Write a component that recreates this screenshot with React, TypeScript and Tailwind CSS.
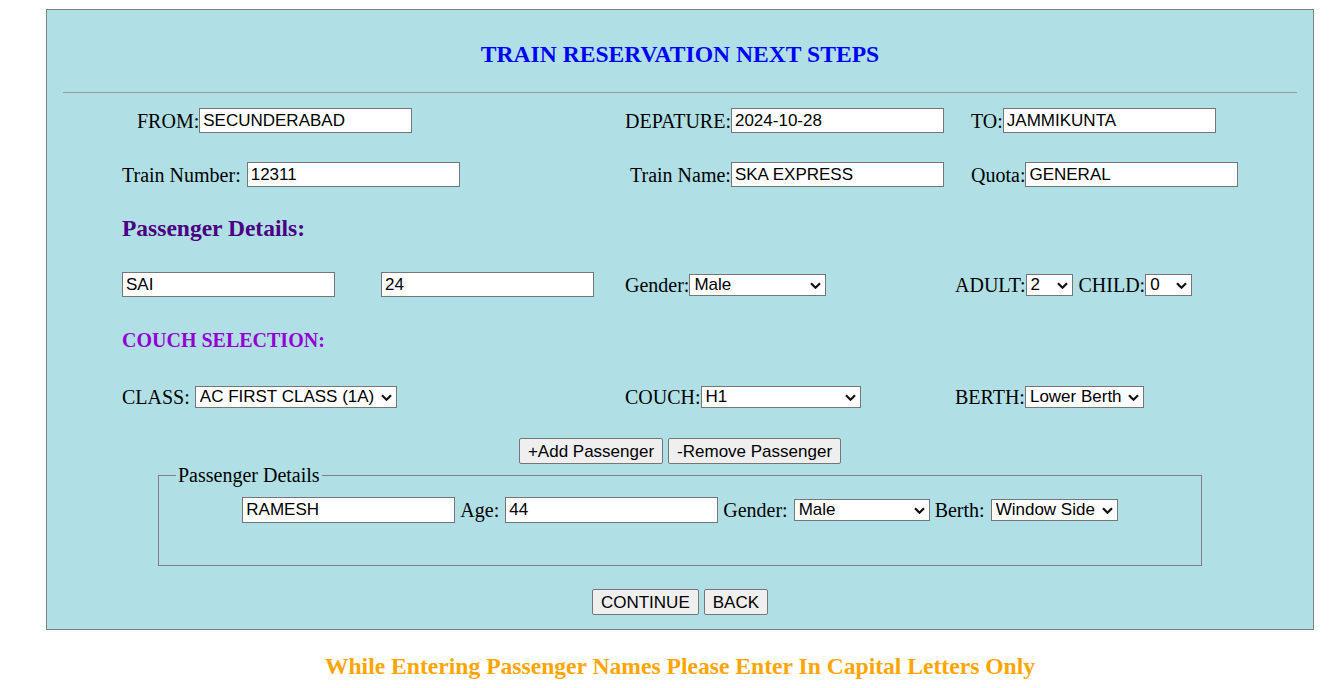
import React from 'react';

const serif = { fontFamily: '"Liberation Serif", "Times New Roman", serif' };

const field =
  'h-[25px] w-[213px] border border-[#767676] bg-white px-[3px] text-[17px] text-black [font-family:"Liberation_Sans",Arial,sans-serif] outline-none';
const btn =
  'h-[26px] rounded-[2px] border border-[#767676] bg-[#efefef] px-[8px] text-[17px] text-black [font-family:"Liberation_Sans",Arial,sans-serif]';

function Pick({ width, value, options }: { width: string; value: string; options: string[] }) {
  return (
    <div className={`relative inline-flex ${width}`}>
      <select
        defaultValue={value}
        className='h-[22px] w-full appearance-none border border-[#767676] bg-white pl-[4px] pr-[20px] text-[17px] leading-[20px] text-black [font-family:"Liberation_Sans",Arial,sans-serif]'
      >
        {options.map((o) => (
          <option key={o}>{o}</option>
        ))}
      </select>
      <svg
        className="pointer-events-none absolute right-[5px] top-[8px]"
        width="11"
        height="7"
        viewBox="0 0 11 7"
        fill="none"
        stroke="#111"
        strokeWidth="2.2"
      >
        <path d="M1 1.2l4.5 4.5 4.5-4.5" />
      </svg>
    </div>
  );
}

export default function App() {
  return (
    <div className="min-h-[688px] bg-white text-[20px] text-black" style={serif}>
      <div className="ml-[46px] mt-[9px] w-[1268px] border border-[#808080] bg-[#b0e0e6]">
        {/* Heading */}
        <div className="flex h-[82px] items-center justify-center pt-[8px]">
          <h2 className="text-[23.6px] font-bold text-[#0000ff]">TRAIN RESERVATION NEXT STEPS</h2>
        </div>
        <div className="mx-[16px] h-px bg-[#9a9a9a]" />

        <div className="pl-[75px]">
          {/* Journey */}
          <div className="flex h-[55px] items-center">
            <div className="flex w-[503px] items-center pl-[15px]">
              <span>FROM:</span>
              <input className={field} defaultValue="SECUNDERABAD" />
            </div>
            <div className="flex w-[331px] items-center">
              <span>DEPATURE:</span>
              <input className={field} defaultValue="2024-10-28" />
            </div>
            <div className="flex items-center pl-[15px]">
              <span>TO:</span>
              <input className={field} defaultValue="JAMMIKUNTA" />
            </div>
          </div>

          {/* Train */}
          <div className="flex h-[53px] items-center">
            <div className="flex w-[503px] items-center">
              <span className="mr-[6px]">Train Number:</span>
              <input className={field} defaultValue="12311" />
            </div>
            <div className="flex w-[331px] items-center pl-[5px]">
              <span>Train Name:</span>
              <input className={field} defaultValue="SKA EXPRESS" />
            </div>
            <div className="flex items-center pl-[15px]">
              <span>Quota:</span>
              <input className={field} defaultValue="GENERAL" />
            </div>
          </div>

          <div className="flex h-[56px] items-center">
            <h3 className="text-[23.5px] font-bold text-[#4b0082]">Passenger Details:</h3>
          </div>

          {/* Passenger */}
          <div className="flex h-[55px] items-center">
            <div className="flex w-[503px] items-center gap-[46px]">
              <input className={field} defaultValue="SAI" />
              <input className={field} defaultValue="24" />
            </div>
            <div className="flex w-[331px] items-center">
              <span>Gender:</span>
              <Pick width="w-[137px]" value="Male" options={['Male', 'Female']} />
            </div>
            <div className="-ml-px flex items-center">
              <span>ADULT:</span>
              <Pick width="w-[47px]" value="2" options={['1', '2']} />
              <span className="ml-[6px]">CHILD:</span>
              <Pick width="w-[47px]" value="0" options={['0', '1']} />
            </div>
          </div>

          <div className="flex h-[56px] items-center">
            <h4 className="text-[20px] font-bold text-[#9400d3]">COUCH SELECTION:</h4>
          </div>

          {/* Class */}
          <div className="flex h-[57px] items-center">
            <div className="flex w-[503px] items-center">
              <span className="mr-[5px]">CLASS:</span>
              <Pick width="w-[202px]" value="AC FIRST CLASS (1A)" options={['AC FIRST CLASS (1A)', 'SLEEPER (SL)']} />
            </div>
            <div className="flex w-[331px] items-center">
              <span>COUCH:</span>
              <Pick width="w-[160px]" value="H1" options={['H1', 'H2']} />
            </div>
            <div className="-ml-px flex items-center">
              <span>BERTH:</span>
              <Pick width="w-[119px]" value="Lower Berth" options={['Lower Berth', 'Upper Berth']} />
            </div>
          </div>
        </div>

        <div className="flex justify-center gap-[5px] pt-[13px]">
          <button className={btn}>+Add Passenger</button>
          <button className={btn}>-Remove Passenger</button>
        </div>

        <fieldset className="mx-[111px] -mt-[4px] border border-[#808080] px-[17px] pb-[40px] pt-[5px]">
          <legend className="px-[2px] text-[20px]">Passenger Details</legend>
          <div className="flex items-center justify-center">
            <input className={`${field} h-[26px]`} defaultValue="RAMESH" />
            <span className="ml-[5px] mr-[6px]">Age:</span>
            <input className={`${field} h-[26px]`} defaultValue="44" />
            <span className="ml-[5px] mr-[6px]">Gender:</span>
            <Pick width="w-[136px]" value="Male" options={['Male', 'Female']} />
            <span className="ml-[5px] mr-[6px]">Berth:</span>
            <Pick width="w-[127px]" value="Window Side" options={['Window Side', 'Aisle Side']} />
          </div>
        </fieldset>

        <div className="flex justify-center gap-[5px] pb-[14px] pt-[23px]">
          <button className={btn}>CONTINUE</button>
          <button className={btn}>BACK</button>
        </div>
      </div>

      <p className="ml-[46px] mt-[19px] w-[1268px] text-center text-[23.6px] font-bold text-[#ffa500]">
        While Entering Passenger Names Please Enter In Capital Letters Only
      </p>
    </div>
  );
}
